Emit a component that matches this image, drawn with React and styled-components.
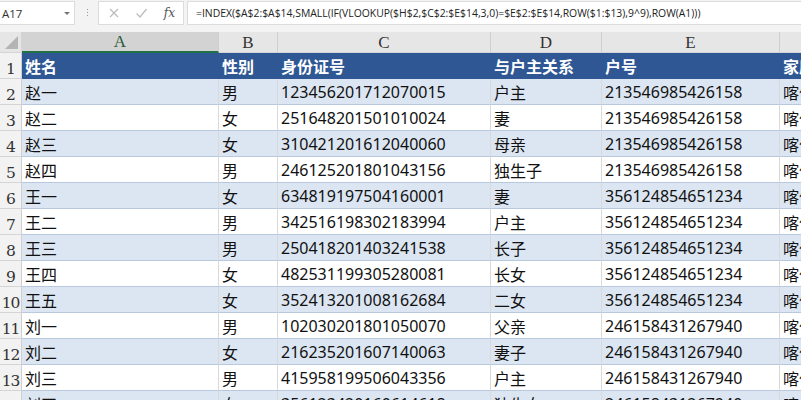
import React from 'react';
import styled, { createGlobalStyle } from 'styled-components';

const GlobalStyle = createGlobalStyle`
  html, body {
    margin: 0;
    padding: 0;
    background: #ffffff;
    overflow: hidden;
  }
  * { box-sizing: border-box; }
`;

// column F is wider than what is left of the window, so it runs off the right edge
const COLS = '22px 197px 59px 213px 111px 178px 180px';
const CJK = '"Noto Sans", "Noto Sans CJK SC", sans-serif';
const SERIF = '"DejaVu Serif", "Liberation Serif", serif';

const Sheet = styled.div`
  width: 801px;
  height: 400px;
  overflow: hidden;
  background: #fff;
`;

const FormulaBar = styled.div`
  display: flex;
  align-items: flex-start;
  height: 32px;
  padding-top: 1px;
  background: #f3f3f3;
  font-family: "Open Sans", "Liberation Sans", sans-serif;
`;

const NameBox = styled.div`
  display: flex;
  align-items: center;
  justify-content: space-between;
  width: 75px;
  height: 24px;
  padding: 0 4px 0 2px;
  background: #fff;
  border: 1px solid #dcdcdc;
  border-left: none;
  font-size: 11.5px;
  color: #333;
`;

const Caret = styled.span`
  width: 0;
  height: 0;
  border-left: 3px solid transparent;
  border-right: 3px solid transparent;
  border-top: 3px solid #777;
`;

const Grip = styled.div`
  display: flex;
  flex-direction: column;
  gap: 2px;
  margin: 8px 10px 0 12px;
  span {
    width: 1px;
    height: 1px;
    background: #999;
  }
`;

const FxBox = styled.div`
  display: flex;
  align-items: center;
  justify-content: space-between;
  width: 86px;
  height: 24px;
  padding: 0 8px 0 9px;
  background: #fff;
  border: 1px solid #dcdcdc;
  color: #bcbcbc;
`;

const FxLabel = styled.span`
  font-family: ${SERIF};
  font-style: italic;
  font-size: 12px;
  color: #555;
`;

const FormulaInput = styled.div`
  flex: 1;
  height: 24px;
  margin-left: 3px;
  padding: 0 8px;
  display: flex;
  align-items: center;
  background: #fff;
  border: 1px solid #dcdcdc;
  border-right: none;
  font-size: 10.4px;
  color: #222;
  white-space: nowrap;
  overflow: hidden;
`;

const Row = styled.div`
  display: grid;
  grid-template-columns: ${COLS};
  height: ${p => p.$h || 26}px;
`;

const Corner = styled.div`
  position: relative;
  background: #e6e6e6;
  border-right: 1px solid #d4d4d4;
  border-bottom: 1px solid #d4d4d4;
  &::after {
    content: '';
    position: absolute;
    right: 3px;
    bottom: 3px;
    border-left: 13px solid transparent;
    border-bottom: 13px solid #b4b4b4;
  }
`;

const ColHead = styled.div`
  display: flex;
  align-items: flex-end;
  justify-content: center;
  padding-bottom: 1px;
  background: ${p => (p.$active ? '#d3d3d3' : '#e6e6e6')};
  border-right: 1px solid #cfcfcf;
  border-bottom: ${p => (p.$active ? '2px solid #217346' : '1px solid #d4d4d4')};
  font-family: "Liberation Serif", serif;
  font-size: 17px;
  line-height: 1;
  color: ${p => (p.$active ? '#2a5a3c' : '#333')};
`;

const RowHead = styled.div`
  display: flex;
  align-items: flex-end;
  justify-content: center;
  background: #f2f2f2;
  border-right: 1px solid #cfcfcf;
  border-bottom: 1px solid #d4d4d4;
  font-family: ${SERIF};
  font-size: 15.5px;
  letter-spacing: -1px;
  color: #333;
  line-height: 1;
  padding-bottom: 1px;
`;

const Cell = styled.div`
  display: flex;
  align-items: center;
  padding: 1px 0 0 3px;
  background: ${p => (p.$head ? '#2e5794' : p.$alt ? '#dce6f2' : '#ffffff')};
  border-right: 1px solid ${p => (p.$head ? '#2e5794' : '#d9d9d9')};
  border-bottom: 1px solid ${p => (p.$head ? '#2e5794' : '#b8c8de')};
  font-family: ${CJK};
  font-size: 16px;
  font-weight: ${p => (p.$head ? 700 : 400)};
  color: ${p => (p.$head ? '#ffffff' : '#111')};
  white-space: nowrap;
  overflow: hidden;
`;

const header = ['姓名', '性别', '身份证号', '与户主关系', '户号', '家庭住址'];

const rows = [
  ['赵一', '男', '123456201712070015', '户主', '213546985426158'],
  ['赵二', '女', '251648201501010024', '妻', '213546985426158'],
  ['赵三', '女', '310421201612040060', '母亲', '213546985426158'],
  ['赵四', '男', '246125201801043156', '独生子', '213546985426158'],
  ['王一', '女', '634819197504160001', '妻', '356124854651234'],
  ['王二', '男', '342516198302183994', '户主', '356124854651234'],
  ['王三', '男', '250418201403241538', '长子', '356124854651234'],
  ['王四', '女', '482531199305280081', '长女', '356124854651234'],
  ['王五', '女', '352413201008162684', '二女', '356124854651234'],
  ['刘一', '男', '102030201801050070', '父亲', '246158431267940'],
  ['刘二', '女', '216235201607140063', '妻子', '246158431267940'],
  ['刘三', '男', '415958199506043356', '户主', '246158431267940'],
  ['刘四', '女', '356123420160614618', '独生女', '246158431267940'],
];

const Cross = () => (
  <svg width="12" height="12" viewBox="0 0 12 12" fill="none" stroke="#bdbdbd" strokeWidth="1.3">
    <path d="M2 2 L10 10 M10 2 L2 10" />
  </svg>
);

const Check = () => (
  <svg width="13" height="12" viewBox="0 0 13 12" fill="none" stroke="#bdbdbd" strokeWidth="1.3">
    <path d="M1.5 6.5 L5 10 L11.5 2" />
  </svg>
);

export default function App() {
  return (
    <Sheet>
      <GlobalStyle />
      <FormulaBar>
        <NameBox>
          A17
          <Caret />
        </NameBox>
        <Grip>
          <span />
          <span />
          <span />
        </Grip>
        <FxBox>
          <Cross />
          <Check />
          <FxLabel>fx</FxLabel>
        </FxBox>
        <FormulaInput>
          =INDEX($A$2:$A$14,SMALL(IF(VLOOKUP($H$2,$C$2:$E$14,3,0)=$E$2:$E$14,ROW($1:$13),9^9),ROW(A1)))
        </FormulaInput>
      </FormulaBar>

      <Row $h={21}>
        <Corner />
        <ColHead $active>A</ColHead>
        <ColHead>B</ColHead>
        <ColHead>C</ColHead>
        <ColHead>D</ColHead>
        <ColHead>E</ColHead>
        <ColHead>F</ColHead>
      </Row>

      <Row>
        <RowHead>1</RowHead>
        {header.map(h => (
          <Cell key={h} $head>{h}</Cell>
        ))}
      </Row>

      {rows.map((r, i) => (
        <Row key={r[2]}>
          <RowHead>{i + 2}</RowHead>
          {r.map((v, j) => (
            <Cell key={j} $alt={i % 2 === 0}>{v}</Cell>
          ))}
          <Cell $alt={i % 2 === 0}>喀什市</Cell>
        </Row>
      ))}
    </Sheet>
  );
}
